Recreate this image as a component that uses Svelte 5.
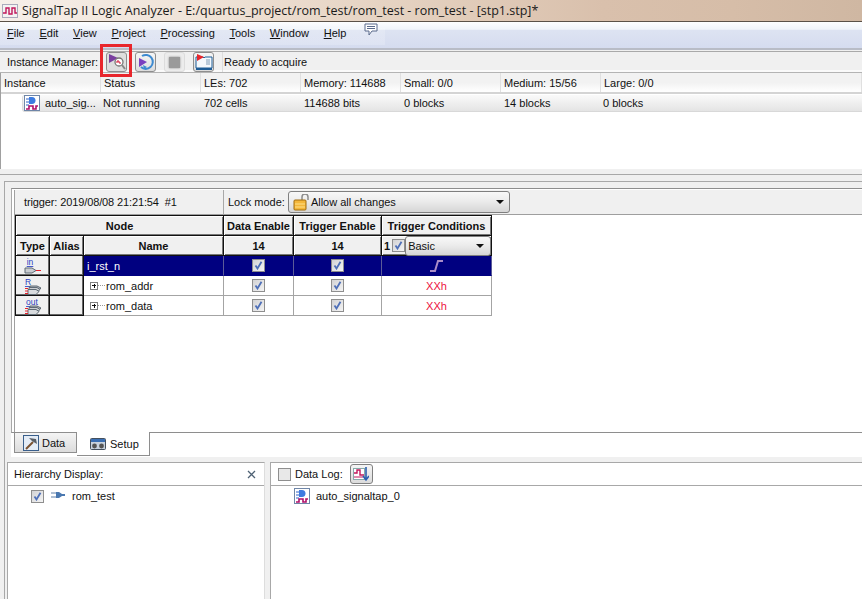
<script>
  const menus = [['F','ile'],['E','dit'],['V','iew'],['P','roject'],['P','rocessing'],['T','ools'],['W','indow'],['H','elp']];
  const heads = ['Instance','Status','LEs: 702','Memory: 114688','Small: 0/0','Medium: 15/56','Large: 0/0'];
  const cells = ['Not running','702 cells','114688 bits','0 blocks','14 blocks','0 blocks'];
</script>

{#snippet chip(size = 16)}
  <svg class="ico" width={size} height={size} viewBox="0 0 16 16">
    <rect x=".5" y=".5" width="15" height="15" fill="#fff" stroke="#6f86a8"/>
    <path d="M2 4h3M2 7h3M2 10h3" stroke="#2f62c8"/>
    <path d="M5 2h3a3 3 0 0 1 0 7H5z" fill="#3d7be0"/>
    <path d="M2 14h3v-3h4v3h3v-3h2" fill="none" stroke="#b0106a" stroke-width="1.6"/>
  </svg>
{/snippet}

{#snippet check()}
  <span class="check"><svg width="9" height="9" viewBox="0 0 9 9"><path d="M1.5 4.5l2 3L7.5 .8" fill="none" stroke="#4f70b8" stroke-width="1.8"/></svg></span>
{/snippet}

{#snippet stack(label, tx)}
  <svg width="28" height="18" viewBox="0 0 28 18">
    <text x={tx} y="8" text-anchor="middle" class="blue">{label}</text>
    <path d="M11 9h7l4 2-3 3h-8z" fill="#aeb4ba" stroke="#5f6b75"/>
    <path d="M10 10.500h8l3 2-3 3h-8z" fill="#c8ccd0" stroke="#5f6b75"/>
    <path d="M9 12.500h8l3 2-3 3H9z" fill="#d8dbde" stroke="#5f6b75"/>
    <path d="M6 11.500h3M6 14h3M6 16.500h3" stroke="#e8202a"/>
  </svg>
{/snippet}

<div class="window">
  <div class="title">
    <svg width="16" height="14" viewBox="0 0 16 14">
      <rect x=".5" y=".5" width="15" height="13" fill="#f3f3f3" stroke="#aab"/>
      <path d="M1 9h3V4h3v6h3V4h3v5h2" fill="none" stroke="#c2185b" stroke-width="1.4"/>
    </svg>
    <span>SignalTap II Logic Analyzer - E:/quartus_project/rom_test/rom_test - rom_test - [stp1.stp]*</span>
  </div>

  <nav class="menu">
    {#each menus as m}<span><u>{m[0]}</u>{m[1]}</span>{/each}
    <svg width="14" height="13" viewBox="0 0 14 13"><path d="M1 1h12v7H8l-3 4V8H1z" fill="#fff" stroke="#5b6b8c"/><path d="M3 3.500h8M3 5.500h8" stroke="#5b6b8c"/></svg>
  </nav>

  <div class="toolbar">
    <span class="tlabel">Instance Manager:</span>
    <div class="tbtn first">
      <svg width="18" height="18" viewBox="0 0 18 18">
        <path d="M1 1l9 4-9 5z" fill="#7a3fa0"/>
        <circle cx="11" cy="9" r="4" fill="#fff" stroke="#777" stroke-width="1.3"/>
        <path d="M9 10V8h2v2h2" fill="none" stroke="#d01030"/>
        <path d="M14 12l3 4" stroke="#888" stroke-width="2"/>
      </svg>
    </div>
    <div class="tbtn">
      <svg width="18" height="18" viewBox="0 0 18 18">
        <path d="M5 3a7 7 0 1 1-1 11" fill="none" stroke="#3d8ad0" stroke-width="2"/>
        <path d="M2 5l8 4-8 5z" fill="#7a3fc0"/>
        <path d="M6 12l1 4 3-2z" fill="#3d8ad0"/>
      </svg>
    </div>
    <div class="tbtn off"><span class="stop"></span></div>
    <div class="tbtn">
      <svg width="18" height="18" viewBox="0 0 18 18">
        <path d="M1 15V4h7l1 1 1-1h7v11H9z" fill="#f4f8fc" stroke="#1d5c96"/>
        <path d="M1 15h16v2H1z" fill="#1d5c96"/>
        <path d="M2 1l7 3-7 4z" fill="#e8262c"/>
        <path d="M11 7h4M11 9h4M11 11h4" stroke="#7e9cb8"/>
      </svg>
    </div>
    <div class="ready">Ready to acquire</div>
  </div>

  <div class="instances">
    <div class="igrid">
      {#each heads as h}<div class="ih">{h}</div>{/each}
    </div>
    <div class="irow">
      <div class="iname">{@render chip()}<span>auto_sig...</span></div>
      {#each cells as c}<div>{c}</div>{/each}
    </div>
  </div>

  <div class="split"></div>

  <div class="outer">
    <div class="inner">
      <div class="panel">
        <div class="content">
          <div class="tophead">
            <div class="trig">trigger: 2019/08/08 21:21:54&nbsp; #1</div>
            <div class="lock">
              <span>Lock mode:</span>
              <div class="combo lockcombo">
                <svg width="18" height="17" viewBox="0 0 18 17">
                  <path d="M9 6V3a3 3 0 0 1 6 0v3" fill="none" stroke="#8c8c8c" stroke-width="1.5"/>
                  <rect x="1" y="6" width="12" height="10" rx="1" fill="#f4b73a" stroke="#a06c10"/>
                  <path d="M2 10h10M2 13h10" stroke="#fde08a"/>
                </svg>
                <span class="ctext">Allow all changes</span>
                <span class="arrow"></span>
              </div>
            </div>
          </div>

          <div class="table">
            <div class="th node">Node</div>
            <div class="th">Data Enable</div>
            <div class="th">Trigger Enable</div>
            <div class="th">Trigger Conditions</div>

            <div class="th">Type</div>
            <div class="th">Alias</div>
            <div class="th">Name</div>
            <div class="th">14</div>
            <div class="th">14</div>
            <div class="th tc">
              <span class="one">1</span>{@render check()}
              <div class="combo basic"><span class="ctext">Basic</span><span class="arrow"></span></div>
            </div>

            <div class="side">
              <svg width="28" height="18" viewBox="0 0 28 18">
                <text x="11" y="8" text-anchor="middle" class="blue">in</text>
                <path d="M6 11h7l4 2.500-4 2.500H6z" fill="#c9ccd0" stroke="#5f6b75"/>
                <path d="M17 13.500h5" stroke="#e8202a"/>
              </svg>
            </div>
            <div class="side"></div>
            <div class="td sel name">i_rst_n</div>
            <div class="td sel">{@render check()}</div>
            <div class="td sel">{@render check()}</div>
            <div class="td sel">
              <svg width="16" height="14" viewBox="0 0 16 14"><path d="M1 12h5l3-10h5" fill="none" stroke="#a98cc8" stroke-width="2"/></svg>
            </div>

            <div class="side">{@render stack('R', 9)}</div>
            <div class="side"></div>
            <div class="td name"><span class="plus"></span><span class="dots"></span>rom_addr</div>
            <div class="td">{@render check()}</div>
            <div class="td">{@render check()}</div>
            <div class="td red">XXh</div>

            <div class="side">{@render stack('out', 13)}</div>
            <div class="side"></div>
            <div class="td name"><span class="plus"></span><span class="dots"></span>rom_data</div>
            <div class="td">{@render check()}</div>
            <div class="td">{@render check()}</div>
            <div class="td red">XXh</div>
          </div>
        </div>
      </div>

      <div class="tabs">
        <div class="tab data">
          <svg width="16" height="16" viewBox="0 0 16 16">
            <rect x=".5" y=".5" width="15" height="15" fill="#e4ecf6" stroke="#3a5f8c"/>
            <path d="M3 14l7-7" stroke="#7a5230" stroke-width="2"/>
            <path d="M6 3l7 1 1 5-5-3z" fill="#5a5f66"/>
          </svg>
          <span>Data</span>
        </div>
        <div class="tab setup">
          <svg width="16" height="12" viewBox="0 0 16 12">
            <rect x=".5" y=".5" width="15" height="11" rx="1" fill="#c9d3df" stroke="#44505e"/>
            <rect x="1" y="1" width="14" height="3" fill="#3a6fb4"/>
            <circle cx="4.500" cy="8" r="2.400" fill="#555"/>
            <circle cx="11.500" cy="8" r="2.400" fill="#555"/>
          </svg>
          <span>Setup</span>
        </div>
      </div>
    </div>
  </div>

  <div class="bottom">
    <section class="hier">
      <header><span>Hierarchy Display:</span><svg width="9" height="9" viewBox="0 0 9 9"><path d="M1 1l7 7M8 1L1 8" stroke="#4e6174" stroke-width="1.3"/></svg></header>
      <div class="tree">
        {@render check()}
        <svg class="plug" width="14" height="8" viewBox="0 0 14 8"><path d="M0 2h5M0 6h5" stroke="#5f7fa8"/><path d="M5 1h3l3 2h3v2h-3l-3 2H5z" fill="#4a78b0"/></svg>
        <span>rom_test</span>
      </div>
    </section>
    <section class="log">
      <header>
        <span class="check blank"></span>
        <span class="dl">Data Log:</span>
        <div class="logbtn">
          <svg width="16" height="16" viewBox="0 0 16 16">
            <rect x=".5" y="2.500" width="11" height="11" fill="#fff" stroke="#8aa"/>
            <path d="M1 7h3V4h3v5h4" fill="none" stroke="#c2185b" stroke-width="1.4"/>
            <path d="M1 11h9" stroke="#c2185b"/>
            <path d="M13 1v12M10 10l3 4 3-4" fill="none" stroke="#2b5fb0" stroke-width="1.6"/>
          </svg>
        </div>
      </header>
      <div class="loglist">{@render chip()}<span>auto_signaltap_0</span></div>
    </section>
  </div>
</div>

<style>
  :global(body) { margin: 0; background: #fff; overflow: hidden; }
  .window {
    width: 862px; height: 599px; overflow: hidden; display: flex; flex-direction: column;
    font: 11px/14px "Liberation Sans", Arial, sans-serif; color: #111; background: #f0f0f0;
  }
  .title {
    height: 22px; box-sizing: border-box; display: flex; align-items: center; gap: 4px; padding-left: 2px; flex: none;
    background: linear-gradient(90deg, #f6efe9 0, #efe2d6 25%, #e3cfbd 50%, #d9c0ac 70%, #d6bda8 85%, #cfb7a2 100%);
    border-bottom: 1px solid #5a5148; font: 12.5px "Open Sans", sans-serif; color: #1a1a1a;
  }
  .menu {
    height: 28px; flex: none; box-sizing: border-box; display: flex; align-items: flex-start; gap: 14.7px; padding: 4px 0 0 7px;
    background:
      linear-gradient(90deg, rgba(255,255,255,.18) 385px, transparent 385px) 0 6px / 100% 17px no-repeat,
      linear-gradient(#fdfeff 0, #f0f4fa 28%, #dde3f2 32%, #d5dcef 100%);
    border-bottom: 2px solid #b8bcc6;
  }
  .menu svg { margin: -3px 0 0 3px; }
  .menu u { text-underline-offset: 1px; }
  .toolbar {
    height: 22px; flex: none; box-sizing: border-box; display: flex; align-items: center; padding: 0 0 0 7px; margin-top: 1px;
    border-top: 1px solid #a9a9a9; border-bottom: 1px solid #b4b4b4; background: #f0f0f0;
    box-shadow: inset 0 -2px 0 #fafafa;
  }
  .tlabel { width: 99px; flex: none; }
  .tbtn {
    width: 21px; height: 20px; box-sizing: border-box; flex: none; margin-right: 8px; display: grid; place-items: center;
    border: 1px solid #8e8e8e; border-radius: 3px; background: linear-gradient(#f6f6f6, #dcdcdc);
  }
  .tbtn.first { position: relative; background: #dedede; }
  .tbtn.first::after {
    content: ""; position: absolute; left: -7px; right: -6px; top: -9px; bottom: -6px;
    border: 3px solid #e8262c;
  }
  .tbtn.off { border-color: #dcdcdc; background: #ececec; }
  .stop { width: 11px; height: 11px; background: #9a9a9a; box-shadow: 0 0 2px #888; }
  .ready { flex: 1; padding-left: 1px; height: 100%; line-height: 20px; border-left: 1px solid #ddd; }
  .instances { height: 96px; flex: none; background: #fff; border-left: 1px solid #a0a0a0; box-sizing: border-box; }
  .igrid { display: grid; grid-template-columns: 100px 100px 100px 100px 100px 100px 1fr; height: 19px; background: linear-gradient(#f2f2f2 0 50%, #fff 100%); border-bottom: 2px solid #d4d4d4; }
  .ih { padding: 3px 0 0 3px; border-right: 1px solid #e0e0e0; }
  .irow { display: grid; height: 17px; margin: 1px 0 0 21px; grid-template-columns: 80px 101px 100px 100px 100px 99px 1fr; background: linear-gradient(#fafafa, #e4e4e4); border-left: 1px solid #ddd; border-radius: 3px 0 0 3px; align-items: center; border-bottom: 1px solid #d8d8d8; box-sizing: border-box; }
  .iname { display: flex; align-items: center; gap: 5px; padding-left: 1px; white-space: nowrap; }
  .split { height: 6px; flex: none; margin-bottom: 6px; background: #f0f0f0; border-bottom: 1px solid #a8a8a8; box-sizing: border-box; }
  .outer { flex: none; height: 276px; margin-left: 4px; border-left: 1px solid #a8a8a8; border-top: 1px solid #a8a8a8; padding: 6px 0 0 6px; box-sizing: border-box; background: #f0f0f0; }
  .inner { height: 100%; display: flex; flex-direction: column; background: #fff; }
  .panel {
    height: 245px; flex: none; box-sizing: border-box; background: #fff; padding: 1px 0 0 2px;
    border: 1px solid #8e8e8e; border-right: 0; border-left-color: #a8a8a8;
  }
  .content { height: 100%; border-left: 1px solid #a0a0a0; }
  .tophead { height: 25px; display: flex; background: #f0f0f0; border-bottom: 1px solid #9e9e9e; box-sizing: border-box; }
  .trig { width: 209px; box-sizing: border-box; padding-left: 9px; line-height: 24px; border-right: 1px solid #a8a8a8; letter-spacing: -.12px; }
  .lock { flex: 1; display: flex; align-items: center; padding-left: 4px; gap: 3px; }
  .combo { display: flex; align-items: center; box-sizing: border-box; border: 1px solid #7f7f7f; border-radius: 3px; background: linear-gradient(#f8f8f8 0, #ececec 45%, #d6d6d6 100%); }
  .lockcombo { width: 222px; height: 22px; padding: 0 5px 0 4px; }
  .ctext { flex: 1; }
  .arrow { width: 0; height: 0; border: 4px solid transparent; border-top: 4px solid #111; border-bottom: 0; }
  .table {
    width: 477px; display: grid; box-sizing: border-box;
    grid-template-columns: 34px 34px 140px 70px 88px 110px;
    grid-template-rows: repeat(5, 20px);
    border-left: 1px solid #111; border-top: 1px solid #111;
  }
  .th {
    background: #f0f0f0; font-weight: 700; display: flex; align-items: center; justify-content: center;
    border-right: 1px solid #111; border-bottom: 1px solid #111;
    box-shadow: inset 1px 1px 0 #fff, inset -1px -1px 0 #777; box-sizing: border-box;
  }
  .node { grid-column: span 3; }
  .tc { justify-content: flex-start; padding-left: 2px; }
  .one { margin-right: 2px; }
  .basic { width: 86px; height: 20px; padding: 0 6px 0 2px; font-weight: 400; flex: none; }
  .side { background: #f0f0f0; border-right: 1px solid #111; border-bottom: 1px solid #111; display: flex; align-items: center; justify-content: center; box-sizing: border-box; box-shadow: inset -1px -1px 0 #666; }
  .td { display: flex; align-items: center; justify-content: center; background: #fff; border-right: 1px solid #a4a4a4; border-bottom: 1px solid #a4a4a4; box-sizing: border-box; }
  .td.name { justify-content: flex-start; padding-left: 3px; }
  .td.sel { background: #000080; color: #fff; border-color: #000080; border-right-color: #5a5a98; }
  .td.red { color: #ec1040; }
  .plus { width: 8px; height: 8px; box-sizing: border-box; border: 1px solid #808080; margin-left: 3px; background:
    linear-gradient(#111,#111) center/4px 1px no-repeat, linear-gradient(#111,#111) center/1px 4px no-repeat, #fff; }
  .dots { width: 7px; margin-right: 1px; border-top: 1px dotted #999; }
  .check { display: inline-grid; place-items: center; width: 13px; height: 13px; flex: none; box-sizing: border-box; border: 1px solid #8e8e8e; background: linear-gradient(135deg, #d2d2d4, #f4f4f4); }
  .check.blank { background: #e8e8e8; }
  .blue { font: 8.5px "Liberation Sans", sans-serif; fill: #2a3fc0; text-decoration: underline; }
  .tabs { height: 25px; flex: none; margin-top: -1px; display: flex; align-items: flex-start; padding-left: 3px; }
  .tab { display: flex; align-items: center; box-sizing: border-box; }
  .data { width: 63px; height: 21px; padding-left: 8px; gap: 3px; background: linear-gradient(#f4f4f4, #dcdcdc); border: 1px solid #8e8e8e; }
  .setup { width: 73px; height: 24px; padding-left: 13px; gap: 4px; background: #fff; border: 1px solid #8e8e8e; border-width: 0 1px 1px 0; }
  .bottom { flex: 1; display: flex; padding: 5px 0 0 2px; gap: 5px; background: #f0f0f0; min-height: 0; margin-left: 4px; border-left: 1px solid #a8a8a8; }
  .hier, .log { background: #fff; border-left: 1px solid #a8a8a8; border-top: 1px solid #a8a8a8; box-sizing: border-box; }
  .hier { width: 258px; flex: none; border-right: 1px solid #ddd; }
  .log { flex: 1; }
  header { height: 23px; display: flex; align-items: center; border-bottom: 1px solid #a8a8a8; background: #fff; box-sizing: border-box; }
  .hier header { justify-content: space-between; padding: 0 8px 0 6px; }
  .log header { padding-left: 7px; }
  .dl { margin: 0 7px 0 4px; }
  .logbtn { width: 23px; height: 20px; display: grid; place-items: center; border: 1px solid #808080; border-radius: 3px; background: linear-gradient(#f5f5f5, #dcdcdc); box-sizing: border-box; }
  .tree { display: flex; align-items: center; padding: 3px 0 0 23px; gap: 7px; }
  .plug { margin-top: -3px; }
  .loglist { display: flex; align-items: center; padding: 2px 0 0 23px; gap: 6px; }
  .ico { flex: none; }
</style>
